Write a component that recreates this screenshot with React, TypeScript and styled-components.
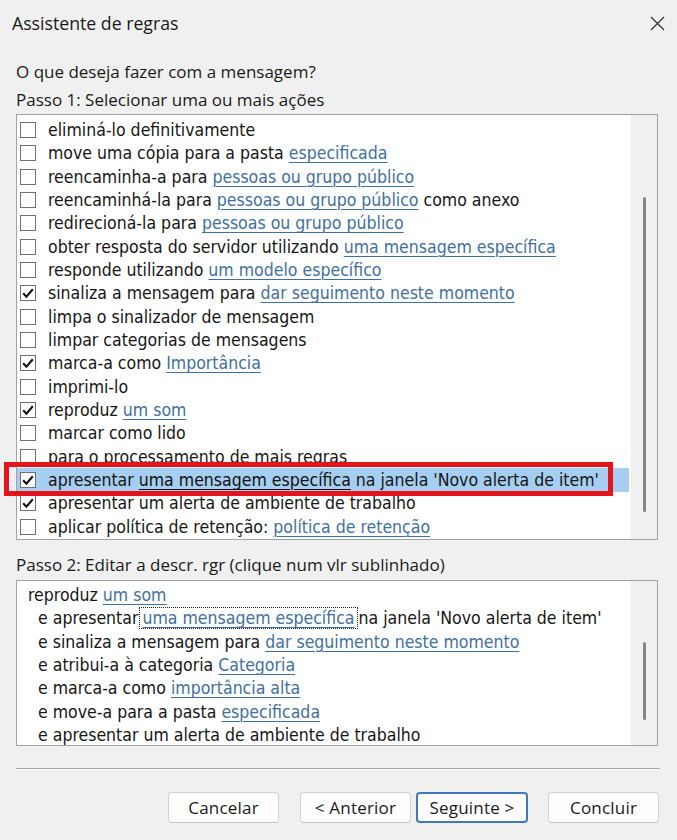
import React from "react";
import styled, { createGlobalStyle } from "styled-components";

const GlobalStyle = createGlobalStyle`
  html, body { margin: 0; padding: 0; background: #f0f0f0; }
  body {
    width: 677px; height: 840px; overflow: hidden;
    font-family: "Open Sans", "Noto Sans", sans-serif;
    color: #1a1a1a;
  }
`;

const Dialog = styled.div`
  position: relative;
  width: 677px;
  height: 840px;
  background: #f0f0f0;
  display: flex;
  flex-direction: column;
`;

const TitleBar = styled.div`
  height: 46px;
  display: flex;
  align-items: center;
  justify-content: space-between;
  padding: 0 12px;
`;

const Title = styled.div`
  font-size: 17.7px;
  color: #1a1a1a;
`;

const CloseButton = styled.div`
  width: 15px;
  height: 15px;
  display: flex;
`;

const Body = styled.div`
  display: flex;
  flex-direction: column;
  padding: 0 19px 0 16px;
`;

const Label = styled.div<{ $mt: number }>`
  margin-top: ${(p) => p.$mt}px;
  height: 24px;
  line-height: 24px;
  font-size: 17px;
  white-space: nowrap;
`;

const ListBox = styled.div<{ $h: number; $mt: number }>`
  margin-top: ${(p) => p.$mt}px;
  height: ${(p) => p.$h}px;
  box-sizing: border-box;
  border: 1px solid #a3a3a3;
  background: #fff;
  display: flex;
  overflow: hidden;
`;

const Rows = styled.div<{ $pt: number }>`
  flex: 1;
  padding-top: ${(p) => p.$pt}px;
  padding-right: 2px;
  display: flex;
  flex-direction: column;
  font-family: "DejaVu Sans Condensed", "DejaVu Sans", sans-serif;
  font-stretch: condensed;
  font-size: 17.55px;
  color: #161616;
`;

const Row = styled.div<{ $selected?: boolean; $indent?: number }>`
  height: 23.35px;
  flex: none;
  display: flex;
  align-items: center;
  padding-left: ${(p) => p.$indent ?? 3}px;
  background: ${(p) => (p.$selected ? "#a6cef0" : "transparent")};
  white-space: nowrap;
`;

const Check = styled.span`
  width: 16px;
  height: 16px;
  box-sizing: border-box;
  border: 1px solid #707070;
  background: #fff;
  margin-right: 12px;
  flex: none;
  display: flex;
  align-items: center;
  justify-content: center;
`;

const Text = styled.span`
  white-space: pre;
`;

const Link = styled.span<{ $plain?: boolean }>`
  color: ${(p) => (p.$plain ? "#111" : "#41709f")};
  text-decoration: underline;
  text-decoration-thickness: 1px;
  text-underline-offset: 3px;
`;

const FocusBox = styled.span`
  display: inline-flex;
  align-items: center;
  height: 22px;
  box-sizing: border-box;
  border: 1px dotted #222;
  padding: 0 2px;
  margin: 0 1px;
`;

const ScrollTrack = styled.div<{ $pt: number }>`
  width: 26px;
  flex: none;
  background: #f0f0f0;
  padding-top: ${(p) => p.$pt}px;
  display: flex;
  justify-content: center;
  box-sizing: border-box;
`;

const Thumb = styled.div<{ $h: number }>`
  width: 3px;
  height: ${(p) => p.$h}px;
  border-radius: 2px;
  background: #858585;
`;

const Separator = styled.div`
  margin: 22px 17px 0 16px;
  height: 2px;
  box-sizing: border-box;
  border-top: 1px solid #a6a6a6;
  border-bottom: 1px solid #fbfbfb;
`;

const ButtonBar = styled.div`
  display: flex;
  justify-content: flex-end;
  padding: 22px 18px 0 0;
`;

const Button = styled.div<{ $ml: number; $w: number; $primary?: boolean }>`
  margin-left: ${(p) => p.$ml}px;
  width: ${(p) => p.$w}px;
  height: 31px;
  box-sizing: border-box;
  border-radius: 4px;
  background: #fdfdfd;
  border: ${(p) => (p.$primary ? "2px solid #3f78bd" : "1px solid #d2d2d2")};
  border-bottom-color: ${(p) => (p.$primary ? "#3f78bd" : "#c2c2c2")};
  display: flex;
  align-items: center;
  justify-content: center;
  font-size: 17px;
  letter-spacing: 0.2px;
  color: #1a1a1a;
`;

const Annotation = styled.div`
  position: absolute;
  left: 4px;
  top: 462px;
  width: 609px;
  height: 34px;
  box-sizing: border-box;
  border: 5px solid #e3141c;
  pointer-events: none;
`;

const Tick = () => (
  <svg width="14" height="14" viewBox="0 0 14 14">
    <path d="M2.2 7.2 L5.4 10.6 L11.8 3.2" fill="none" stroke="#111" strokeWidth="2.1" />
  </svg>
);

type Part = string | { link: string };
type Action = { checked?: boolean; selected?: boolean; parts: Part[] };

const actions: Action[] = [
  { parts: ["eliminá-lo definitivamente"] },
  { parts: ["move uma cópia para a pasta ", { link: "especificada" }] },
  { parts: ["reencaminha-a para ", { link: "pessoas ou grupo público" }] },
  { parts: ["reencaminhá-la para ", { link: "pessoas ou grupo público" }, " como anexo"] },
  { parts: ["redirecioná-la para ", { link: "pessoas ou grupo público" }] },
  { parts: ["obter resposta do servidor utilizando ", { link: "uma mensagem específica" }] },
  { parts: ["responde utilizando ", { link: "um modelo específico" }] },
  { checked: true, parts: ["sinaliza a mensagem para ", { link: "dar seguimento neste momento" }] },
  { parts: ["limpa o sinalizador de mensagem"] },
  { parts: ["limpar categorias de mensagens"] },
  { checked: true, parts: ["marca-a como ", { link: "Importância" }] },
  { parts: ["imprimi-lo"] },
  { checked: true, parts: ["reproduz ", { link: "um som" }] },
  { parts: ["marcar como lido"] },
  { parts: ["para o processamento de mais regras"] },
  {
    checked: true,
    selected: true,
    parts: ["apresentar ", { link: "uma mensagem específica" }, " na janela 'Novo alerta de item'"],
  },
  { checked: true, parts: ["apresentar um alerta de ambiente de trabalho"] },
  { parts: ["aplicar política de retenção: ", { link: "política de retenção" }] },
];

const renderParts = (parts: Part[], plain?: boolean) =>
  parts.map((p, i) =>
    typeof p === "string" ? (
      <Text key={i}>{p}</Text>
    ) : (
      <Link key={i} $plain={plain}>
        {p.link}
      </Link>
    )
  );

export default function App() {
  return (
    <Dialog>
      <GlobalStyle />
      <TitleBar>
        <Title>Assistente de regras</Title>
        <CloseButton>
          <svg width="15" height="15" viewBox="0 0 15 15">
            <path d="M1 1 L14 14 M14 1 L1 14" stroke="#2b2b2b" strokeWidth="1.2" fill="none" />
          </svg>
        </CloseButton>
      </TitleBar>
      <Body>
        <Label $mt={14}>O que deseja fazer com a mensagem?</Label>
        <Label $mt={4}>Passo 1: Selecionar uma ou mais ações</Label>
        <ListBox $h={426} $mt={2}>
          <Rows $pt={3.3}>
            {actions.map((a, i) => (
              <Row key={i} $selected={a.selected}>
                <Check>{a.checked && <Tick />}</Check>
                {renderParts(a.parts, a.selected)}
              </Row>
            ))}
          </Rows>
          <ScrollTrack $pt={82}>
            <Thumb $h={315} />
          </ScrollTrack>
        </ListBox>
        <Label $mt={13}>Passo 2: Editar a descr. rgr (clique num vlr sublinhado)</Label>
        <ListBox $h={166} $mt={3}>
          <Rows $pt={2.3}>
            <Row $indent={11}>
              <Text>reproduz </Text>
              <Link>um som</Link>
            </Row>
            <Row $indent={21}>
              <Text>e apresentar</Text>
              <FocusBox>
                <Link>uma mensagem específica</Link>
              </FocusBox>
              <Text>na janela 'Novo alerta de item'</Text>
            </Row>
            <Row $indent={21}>
              <Text>e sinaliza a mensagem para </Text>
              <Link>dar seguimento neste momento</Link>
            </Row>
            <Row $indent={21}>
              <Text>e atribui-a à categoria </Text>
              <Link>Categoria</Link>
            </Row>
            <Row $indent={21}>
              <Text>e marca-a como </Text>
              <Link>importância alta</Link>
            </Row>
            <Row $indent={21}>
              <Text>e move-a para a pasta </Text>
              <Link>especificada</Link>
            </Row>
            <Row $indent={21}>
              <Text>e apresentar um alerta de ambiente de trabalho</Text>
            </Row>
          </Rows>
          <ScrollTrack $pt={61}>
            <Thumb $h={78} />
          </ScrollTrack>
        </ListBox>
      </Body>
      <Separator />
      <ButtonBar>
        <Button $ml={0} $w={111}>Cancelar</Button>
        <Button $ml={21} $w={111}>&lt; Anterior</Button>
        <Button $ml={5} $w={112} $primary>Seguinte &gt;</Button>
        <Button $ml={20} $w={111}>Concluir</Button>
      </ButtonBar>
      <Annotation />
    </Dialog>
  );
}
